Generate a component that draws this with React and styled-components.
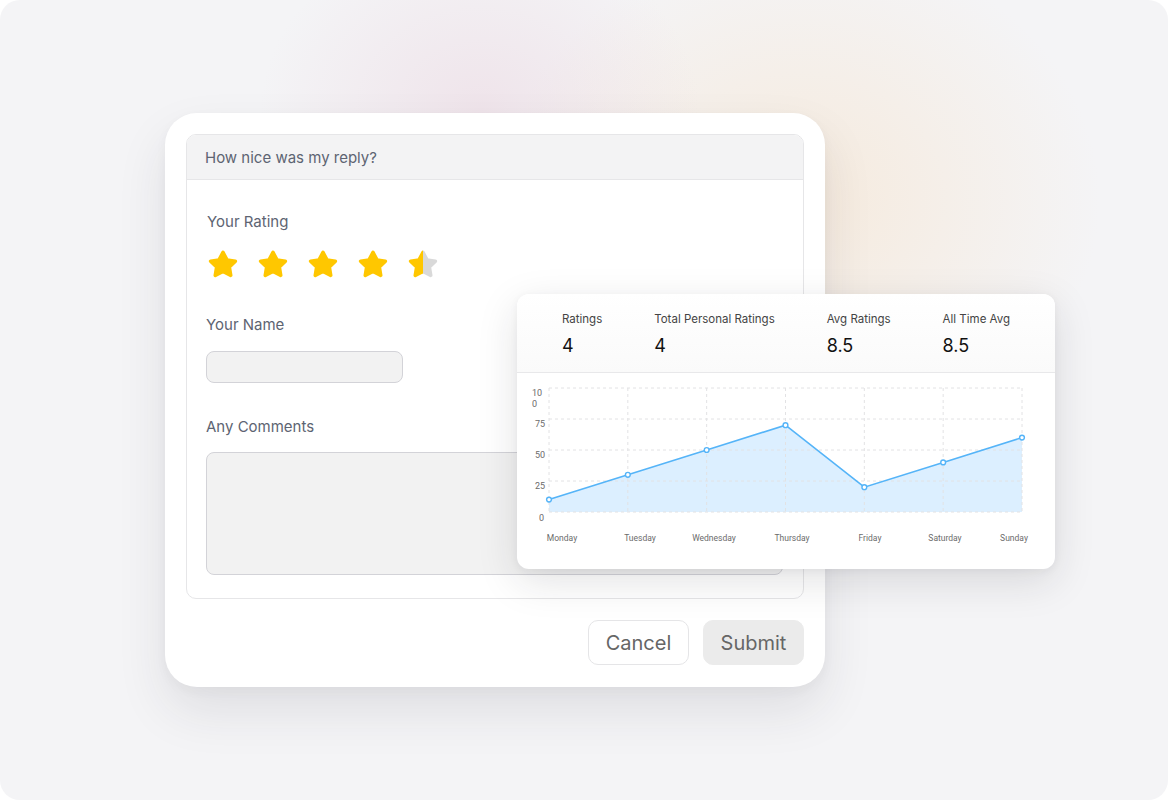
import React from "react";
import styled, { createGlobalStyle } from "styled-components";

const GlobalStyle = createGlobalStyle`
  html, body { margin: 0; padding: 0; background: #ffffff; }
  body { font-family: Inter, "Noto Sans", Arial, sans-serif; -webkit-font-smoothing: antialiased; }
  * { box-sizing: border-box; }
`;

const Stage = styled.div`
  position: relative;
  width: 1168px;
  height: 800px;
  border-radius: 20px;
  overflow: hidden;
  padding: 113px 0 0 165px;
  background:
    radial-gradient(ellipse 220px 180px at 480px 110px, rgba(232, 205, 218, 0.42), rgba(232, 205, 218, 0) 100%),
    radial-gradient(ellipse 300px 260px at 800px 200px, rgba(247, 228, 205, 0.62), rgba(247, 228, 205, 0) 100%),
    #f4f4f6;
`;

const FormCard = styled.div`
  width: 660px;
  height: 574px;
  background: #ffffff;
  border-radius: 32px;
  padding: 21px 21px 22px 21px;
  box-shadow: 0 24px 50px rgba(40, 40, 60, 0.10), 0 4px 12px rgba(40, 40, 60, 0.04);
  display: flex;
  flex-direction: column;
  gap: 21px;
`;

const Panel = styled.div`
  height: 465px;
  border: 1px solid #e6e6e8;
  border-radius: 10px;
  overflow: hidden;
  display: flex;
  flex-direction: column;
`;

const PanelHeader = styled.div`
  height: 45px;
  flex-shrink: 0;
  background: #f3f3f4;
  border-bottom: 1px solid #e6e6e8;
  display: flex;
  align-items: center;
  padding-left: 18px;
  font-size: 15px;
  color: #5d6472;
`;

const PanelBody = styled.div`
  padding: 32px 20px 0 19px;
  display: flex;
  flex-direction: column;
`;

const Field = styled.div`
  display: flex;
  flex-direction: column;
  gap: ${(p) => p.$gap}px;
  margin-bottom: ${(p) => p.$after}px;
`;

const Label = styled.div`
  font-size: 15px;
  line-height: 20px;
  color: #5d6472;
  padding-left: ${(p) => p.$indent || 0}px;
`;

const Stars = styled.div`
  display: flex;
  gap: 20px;
  padding-left: 2px;
`;

const StarSvg = styled.svg`
  width: 30px;
  height: 30px;
  display: block;
`;

const TextInput = styled.div`
  width: 197px;
  height: 32px;
  background: #f2f2f2;
  border: 1px solid #d3d3d8;
  border-radius: 8px;
`;

const TextArea = styled.div`
  width: 577px;
  height: 123px;
  background: #f2f2f2;
  border: 1px solid #d3d3d8;
  border-radius: 8px;
`;

const Actions = styled.div`
  display: flex;
  justify-content: flex-end;
  gap: 14px;
`;

const Button = styled.div`
  width: ${(p) => p.$w}px;
  height: 45px;
  border-radius: 10px;
  display: flex;
  align-items: center;
  justify-content: center;
  font-size: 20px;
  color: #666666;
  background: ${(p) => (p.$primary ? "#ebebeb" : "#ffffff")};
  border: 1px solid ${(p) => (p.$primary ? "#ebebeb" : "#e5e5e7")};
`;

const StatsCard = styled.div`
  position: absolute;
  left: 517px;
  top: 294px;
  width: 538px;
  height: 275px;
  background: #ffffff;
  border-radius: 12px;
  overflow: hidden;
  box-shadow: 0 12px 40px rgba(30, 30, 40, 0.13), 0 2px 8px rgba(30, 30, 40, 0.05);
  display: flex;
  flex-direction: column;
`;

const StatsHeader = styled.div`
  height: 79px;
  flex-shrink: 0;
  background: linear-gradient(#ffffff, #fafafa);
  border-bottom: 1px solid #e8e8ea;
  display: flex;
  justify-content: space-around;
  padding: 17px 19px 0 19px;
`;

const Stat = styled.div`
  display: flex;
  flex-direction: column;
  gap: 8px;
`;

const StatLabel = styled.div`
  font-size: 11.5px;
  line-height: 16px;
  color: #444444;
`;

const StatValue = styled.div`
  font-size: 18px;
  line-height: 22px;
  color: #111111;
`;

const ChartSvg = styled.svg`
  display: block;
  font-family: Roboto, Inter, Arial, sans-serif;
`;

const STAR_POINTS =
  "12,2.6 15.2,8.7 21.9,9.7 17.1,14.4 18.2,21.1 12,17.9 5.8,21.1 6.9,14.4 2.1,9.7 8.8,8.7";

function Star({ half, id }) {
  const fill = half ? `url(#${id})` : "#ffc700";
  return (
    <StarSvg viewBox="0 0 24 24">
      {half && (
        <defs>
          <linearGradient id={id} x1="0" x2="1" y1="0" y2="0">
            <stop offset="0.5" stopColor="#ffc700" />
            <stop offset="0.5" stopColor="#d9d9d9" />
          </linearGradient>
        </defs>
      )}
      <polygon
        points={STAR_POINTS}
        fill={fill}
        stroke={fill}
        strokeWidth="2.8"
        strokeLinejoin="round"
      />
    </StarSvg>
  );
}

const stats = [
  { label: "Ratings", value: "4" },
  { label: "Total Personal Ratings", value: "4" },
  { label: "Avg Ratings", value: "8.5" },
  { label: "All Time Avg", value: "8.5" },
];

const days = [
  { d: "Monday", v: 10, lx: 45 },
  { d: "Tuesday", v: 30, lx: 123 },
  { d: "Wednesday", v: 50, lx: 197 },
  { d: "Thursday", v: 70, lx: 275 },
  { d: "Friday", v: 20, lx: 353 },
  { d: "Saturday", v: 40, lx: 428 },
  { d: "Sunday", v: 60, lx: 497 },
];

function Chart() {
  const x0 = 32;
  const x1 = 505;
  const yTop = 15;
  const yBot = 139;
  const step = (x1 - x0) / 6;
  const px = (i) => x0 + i * step;
  const py = (v) => yBot - (v / 100) * (yBot - yTop);
  const pts = days.map((d, i) => [px(i), py(d.v)]);
  const line = pts.map((p) => p.join(",")).join(" ");
  const area = `${x0},${yBot} ${line} ${x1},${yBot}`;
  const hLines = [0, 25, 50, 75, 100];
  return (
    <ChartSvg width="538" height="195" viewBox="0 0 538 195">
      <polygon points={area} fill="#dcefff" />
      {hLines.map((v) => (
        <line
          key={v}
          x1={x0}
          x2={x1}
          y1={py(v)}
          y2={py(v)}
          stroke="#e2e2e4"
          strokeWidth="1"
          strokeDasharray="3 3"
        />
      ))}
      {days.map((d, i) => (
        <line
          key={d.d}
          x1={px(i)}
          x2={px(i)}
          y1={yTop}
          y2={yBot}
          stroke="#e2e2e4"
          strokeWidth="1"
          strokeDasharray="3 3"
        />
      ))}
      <polyline points={line} fill="none" stroke="#55b4f8" strokeWidth="1.6" />
      {pts.map((p, i) => (
        <circle key={i} cx={p[0]} cy={p[1]} r="2.4" fill="#ffffff" stroke="#55b4f8" strokeWidth="1.4" />
      ))}
      <g fontSize="9" fill="#6b6b6b">
        <text x="15" y="23">10</text>
        <text x="15" y="34">0</text>
        <text x="28" y="54" textAnchor="end">75</text>
        <text x="28" y="85" textAnchor="end">50</text>
        <text x="28" y="116" textAnchor="end">25</text>
        <text x="27" y="148" textAnchor="end">0</text>
      </g>
      <g fontSize="8.5" fill="#6b6b6b">
        {days.map((d) => (
          <text key={d.d} x={d.lx} y="168" textAnchor="middle">
            {d.d}
          </text>
        ))}
      </g>
    </ChartSvg>
  );
}

export default function App() {
  return (
    <>
      <GlobalStyle />
      <Stage>
        <FormCard>
          <Panel>
            <PanelHeader>How nice was my reply?</PanelHeader>
            <PanelBody>
              <Field $gap={17} $after={36}>
                <Label $indent={1}>Your Rating</Label>
                <Stars>
                  <Star />
                  <Star />
                  <Star />
                  <Star />
                  <Star half id="halfStar" />
                </Stars>
              </Field>
              <Field $gap={16} $after={34}>
                <Label>Your Name</Label>
                <TextInput />
              </Field>
              <Field $gap={15} $after={0}>
                <Label>Any Comments</Label>
                <TextArea />
              </Field>
            </PanelBody>
          </Panel>
          <Actions>
            <Button $w={101}>Cancel</Button>
            <Button $w={101} $primary>
              Submit
            </Button>
          </Actions>
        </FormCard>
        <StatsCard>
          <StatsHeader>
            {stats.map((s) => (
              <Stat key={s.label}>
                <StatLabel>{s.label}</StatLabel>
                <StatValue>{s.value}</StatValue>
              </Stat>
            ))}
          </StatsHeader>
          <Chart />
        </StatsCard>
      </Stage>
    </>
  );
}
